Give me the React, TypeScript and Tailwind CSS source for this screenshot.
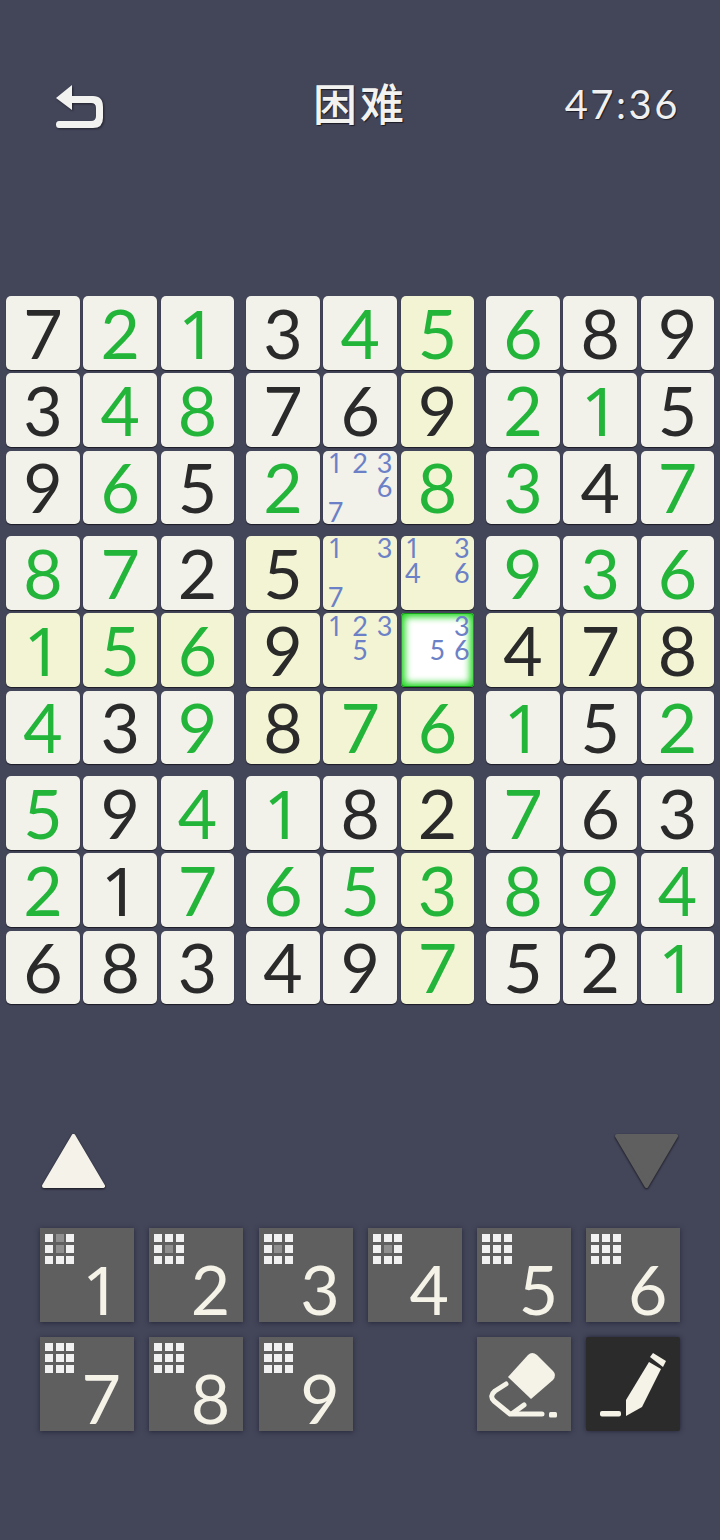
import React from 'react';

const GRID = [
  ['7', '2', '1', '3', '4', '5', '6', '8', '9'],
  ['3', '4', '8', '7', '6', '9', '2', '1', '5'],
  ['9', '6', '5', '2', 'n123 6 7', '8', '3', '4', '7'],
  ['8', '7', '2', '5', 'n1 3 7', 'n1 3 4 6', '9', '3', '6'],
  ['1', '5', '6', '9', 'n1 2 3 5', 'n3 5 6', '4', '7', '8'],
  ['4', '3', '9', '8', '7', '6', '1', '5', '2'],
  ['5', '9', '4', '1', '8', '2', '7', '6', '3'],
  ['2', '1', '7', '6', '5', '3', '8', '9', '4'],
  ['6', '8', '3', '4', '9', '7', '5', '2', '1'],
];

// cells the player filled in (green digits), row by row
const GREEN = [
  [0, 1, 1, 0, 1, 1, 1, 0, 0],
  [0, 1, 1, 0, 0, 0, 1, 1, 0],
  [0, 1, 0, 1, 0, 1, 1, 0, 1],
  [1, 1, 0, 0, 0, 0, 1, 1, 1],
  [1, 1, 1, 0, 0, 0, 0, 0, 0],
  [1, 0, 1, 0, 1, 1, 1, 0, 1],
  [1, 0, 1, 1, 0, 0, 1, 0, 0],
  [1, 0, 1, 1, 1, 1, 1, 1, 1],
  [0, 0, 0, 0, 0, 1, 0, 0, 1],
];

const font = "font-['Lato','Noto_Sans_CJK_SC',sans-serif]";

const isHighlighted = (r: number, c: number) => {
  if (r === 4 && c === 5) return false;
  if (c === 5 || r === 4) return true;
  return r >= 3 && r <= 5 && c >= 3 && c <= 5;
};

// Lato's 1 has a foot, the picture's has none
const digitFont = (d: string) => (d === '1' ? "font-['Noto_Sans',sans-serif]" : '');

const Notes: React.FC<{ digits: string[] }> = ({ digits }) => (
  <div className="grid h-full w-full grid-cols-3 grid-rows-3">
    {['1', '2', '3', '4', '5', '6', '7', '8', '9'].map((d) => (
      <span
        key={d}
        className={`flex items-center justify-center text-[27px] leading-[24px] text-[#6b80c6] ${digitFont(d)}`}
      >
        {digits.includes(d) ? d : ''}
      </span>
    ))}
  </div>
);

const Cell: React.FC<{ r: number; c: number }> = ({ r, c }) => {
  const v = GRID[r][c];
  const selected = r === 4 && c === 5;
  const notes = v.startsWith('n');
  let look = 'bg-[#f2f1ea] rounded-[5px] shadow-[0_1px_1px_rgba(0,0,0,0.6)]';
  if (isHighlighted(r, c)) look = 'bg-[#f3f4d4] rounded-[5px] shadow-[0_1px_1px_rgba(0,0,0,0.6)]';
  if (selected)
    look =
      'bg-white rounded-[4px] shadow-[inset_0_0_0_1px_#14a014,inset_0_0_7px_4px_#22d622,0_1px_1px_rgba(0,0,0,0.6)]';
  return (
    <div className={`flex h-[73.75px] w-[73.75px] items-center justify-center ${look}`}>
      {notes ? (
        <Notes digits={v.slice(1).replace(/ /g, '').split('')} />
      ) : (
        <span className={`text-[68px] leading-none ${digitFont(v)} ${GREEN[r][c] ? 'text-[#22b53a]' : 'text-[#2a2a2a]'}`}>
          {v}
        </span>
      )}
    </div>
  );
};

const Box: React.FC<{ top: number; left: number }> = ({ top, left }) => (
  <div className="grid grid-cols-[repeat(3,73.75px)] gap-[3.5px]">
    {[0, 1, 2].flatMap((i) =>
      [0, 1, 2].map((j) => <Cell key={`${i}${j}`} r={top + i} c={left + j} />),
    )}
  </div>
);

const MiniGrid: React.FC<{ dim: number[] }> = ({ dim }) => (
  <div className="absolute left-[5px] top-[6px] grid grid-cols-[repeat(3,8px)] gap-[2.67px]">
    {[0, 1, 2, 3, 4, 5, 6, 7, 8].map((i) => (
      <div key={i} className={`h-[8px] w-[8px] ${dim.includes(i) ? 'bg-[#8f8f8f]' : 'bg-[#f1f1f1]'}`} />
    ))}
  </div>
);

const NumKey: React.FC<{ n: number; dim?: number[] }> = ({ n, dim = [] }) => (
  <div className="relative h-[94px] w-[94px] bg-[#5f5f5f] shadow-[0_1px_5px_rgba(20,20,35,0.6)]">
    <MiniGrid dim={dim} />
    <span
      className={`absolute bottom-[-1px] right-[13px] text-[68px] leading-none text-[#f5f2e8] ${digitFont(String(n))}`}
    >
      {n}
    </span>
  </div>
);

const App: React.FC = () => {
  return (
    <div className={`flex h-[1540px] w-[720px] flex-col overflow-hidden bg-[#434559] ${font}`}>
      <header className="mt-[70px] grid h-[68px] grid-cols-3 items-center px-[40px]">
        <svg
          width="50"
          height="46"
          viewBox="0 0 50 46"
          className="ml-[15px] mt-[6px] drop-shadow-[1px_1px_1px_rgba(0,0,0,0.5)]"
        >
          <path
            d="M17 1 L1 14 L17 26 L17 19 L36 19 Q41 19 41 24 L41 32 Q41 37 36 37 L4 37 Q1 37 1 40.5 Q1 44 4 44 L38 44 Q48 44 48 34 L48 23 Q48 12 38 12 L17 12 Z"
            fill="#f2f2f0"
          />
        </svg>
        <div className="justify-self-center text-[44px] leading-none font-medium tracking-[3px] text-[#f2f2f0] [text-shadow:1px_1px_1px_rgba(0,0,0,0.6)]">
          困难
        </div>
        <div className="justify-self-end text-[40px] leading-none tracking-[2.5px] text-[#f0f0f0] [text-shadow:1px_1px_1px_rgba(0,0,0,0.6)]">
          47:36
        </div>
      </header>

      <main className="mt-[158px] ml-[6px] grid grid-cols-[repeat(3,228.25px)] gap-x-[11.75px] gap-y-[11.75px]">
        {[0, 3, 6].flatMap((top) => [0, 3, 6].map((left) => <Box key={`${top}${left}`} top={top} left={left} />))}
      </main>

      <div className="mt-[128px] flex items-start justify-between px-[41px]">
        <svg width="65" height="58" viewBox="0 0 65 58" className="drop-shadow-[0_1px_1px_rgba(0,0,0,0.7)]">
          <path d="M32.5 4 L62 54 L3 54 Z" fill="#f5f2ea" stroke="#f5f2ea" strokeWidth="4" strokeLinejoin="round" />
        </svg>
        <svg width="65" height="58" viewBox="0 0 65 58" className="drop-shadow-[0_1px_1px_rgba(0,0,0,0.7)]">
          <path d="M32.5 54 L62 4 L3 4 Z" fill="#5f5f5f" stroke="#5f5f5f" strokeWidth="4" strokeLinejoin="round" />
        </svg>
      </div>

      <div className="mt-[38px] ml-[40px] grid grid-cols-[repeat(6,94px)] gap-x-[15.3px] gap-y-[15px]">
        <NumKey n={1} dim={[1, 4]} />
        <NumKey n={2} dim={[4]} />
        <NumKey n={3} dim={[4]} />
        <NumKey n={4} dim={[4]} />
        <NumKey n={5} />
        <NumKey n={6} />
        <NumKey n={7} />
        <NumKey n={8} />
        <NumKey n={9} />
        <div />
        <div className="flex h-[94px] w-[94px] items-center justify-center bg-[#5f5f5f] shadow-[0_1px_5px_rgba(20,20,35,0.6)]">
          <svg width="94" height="94" viewBox="0 0 94 94">
            <path d="M51 18 Q55 14 60 18 L76 34 Q80 38 76 43 L54 62 L31 40 Z" fill="#f5f2e8" />
            <path
              d="M29 47 L18 54 Q12 59 17 64 L33 77 L65 77"
              fill="none"
              stroke="#f5f2e8"
              strokeWidth="5"
              strokeLinecap="round"
              strokeLinejoin="round"
            />
            <path d="M36 76 L47 68" fill="none" stroke="#f5f2e8" strokeWidth="5" strokeLinecap="round" />
            <rect x="72" y="75" width="8" height="5.5" rx="1.5" fill="#f5f2e8" />
          </svg>
        </div>
        <div className="flex h-[94px] w-[94px] items-center justify-center rounded-[2px] bg-[#2b2b2b] shadow-[0_0_5px_rgba(20,20,35,0.7)]">
          <svg width="94" height="94" viewBox="0 0 94 94">
            <rect x="14" y="74" width="21" height="5.5" rx="2" fill="#f5f2e8" />
            <path d="M40 79 L40 63 L63 25 L75 32 L56 70 Z" fill="#f5f2e8" />
            <path d="M64 20 L67 16 L80 24 L77 30 Z" fill="#f5f2e8" />
          </svg>
        </div>
      </div>
    </div>
  );
};

export default App;
